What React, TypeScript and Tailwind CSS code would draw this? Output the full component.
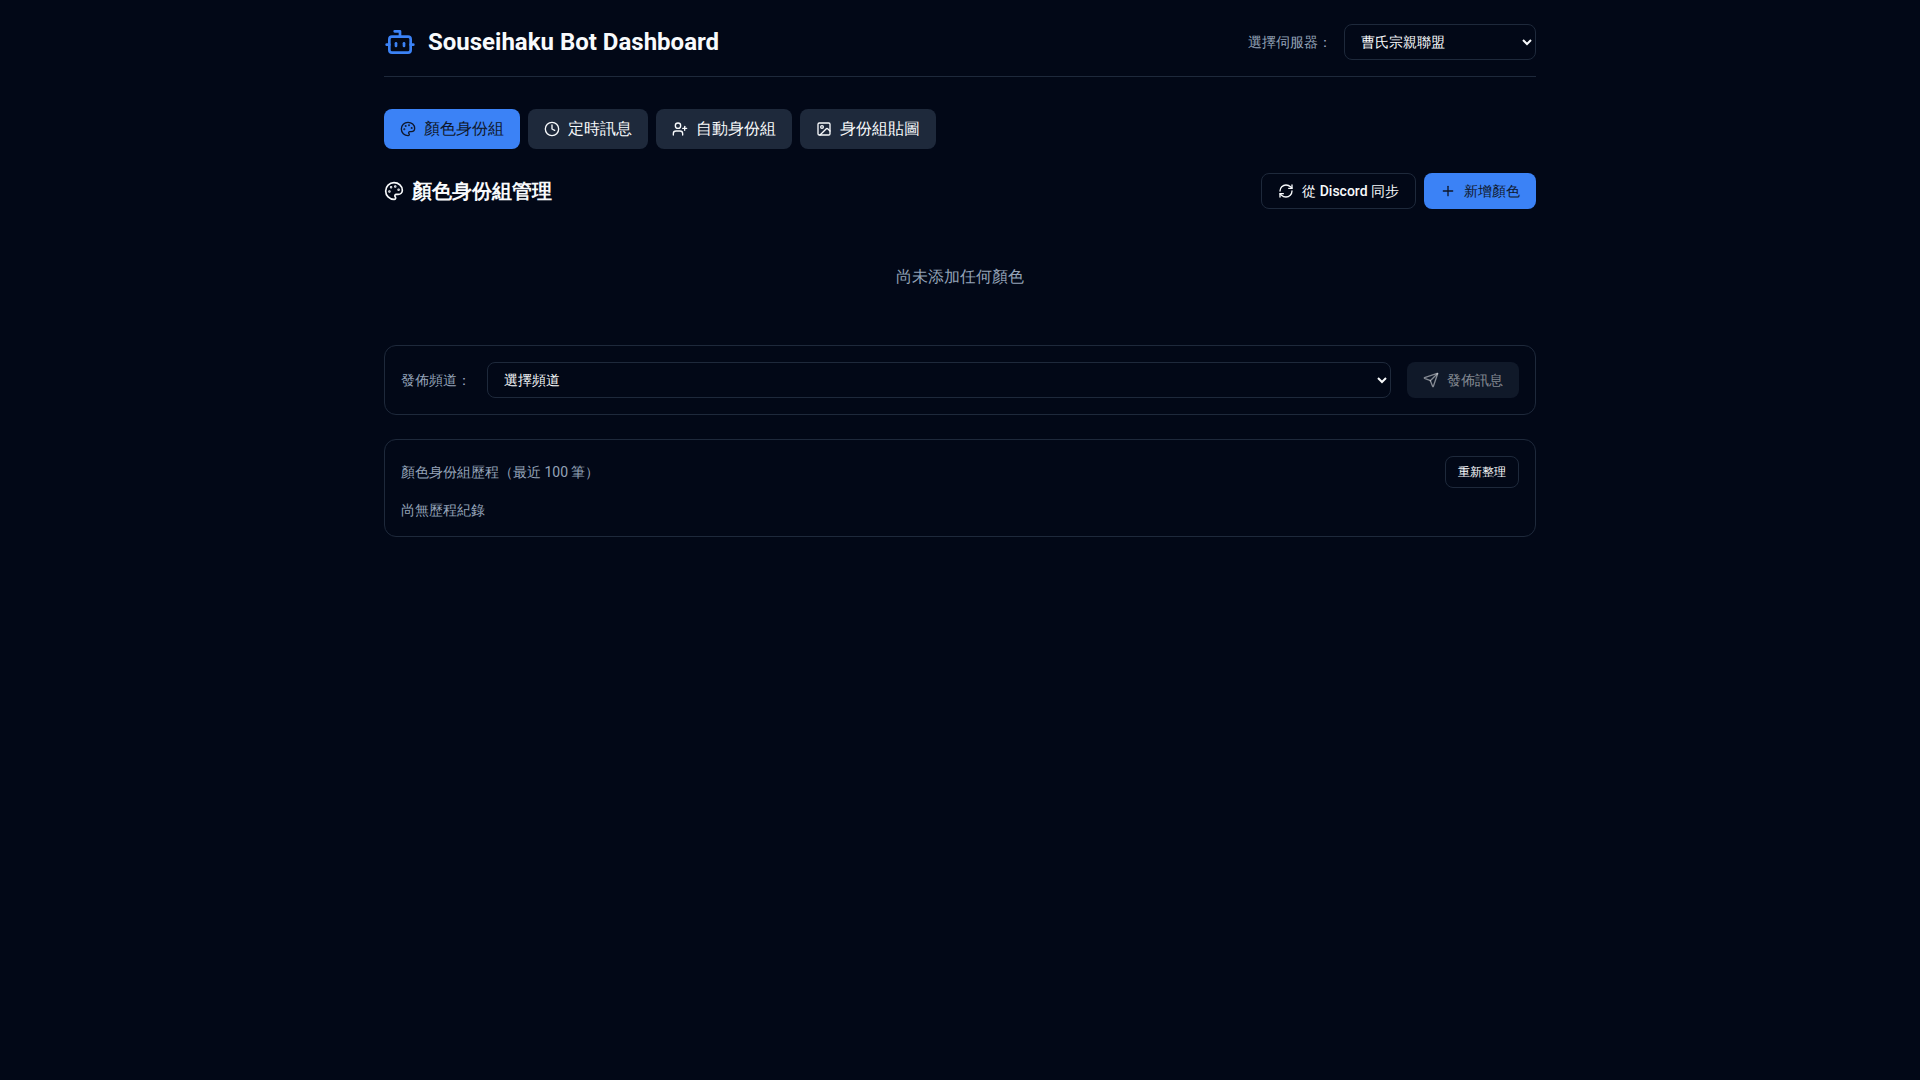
import { Bot, Clock, Image, Palette, Plus, RefreshCw, Send, UserPlus } from "lucide-react";

const font = "font-['Roboto',sans-serif]";

export default function App() {
  return (
    <div className={`min-h-screen bg-[#020817] text-[#f8fafc] ${font}`}>
      <div className="mx-auto w-[1152px]">
        <header className="flex items-center justify-between border-b border-[#1e293b] pt-6 pb-4">
          <div className="flex items-center gap-3">
            <Bot className="h-8 w-8 text-[#3b82f6]" />
            <h1 className="text-2xl font-bold">Souseihaku Bot Dashboard</h1>
          </div>
          <div className="flex items-center gap-3">
            <span className="text-sm font-light text-[#94a3b8]">選擇伺服器：</span>
            <select className="h-9 w-[192px] rounded-lg border border-[#1e293b] bg-[#020817] px-3 text-sm font-light">
              <option>曹氏宗親聯盟</option>
            </select>
          </div>
        </header>

        <nav className="mt-8 flex gap-2">
          <button className="flex h-10 items-center gap-2 rounded-lg bg-[#3b82f6] px-4 text-base font-light text-[#0f172a]">
            <Palette className="h-4 w-4" />
            顏色身份組
          </button>
          <button className="flex h-10 items-center gap-2 rounded-lg bg-[#1e293b] px-4 text-base font-light">
            <Clock className="h-4 w-4" />
            定時訊息
          </button>
          <button className="flex h-10 items-center gap-2 rounded-lg bg-[#1e293b] px-4 text-base font-light">
            <UserPlus className="h-4 w-4" />
            自動身份組
          </button>
          <button className="flex h-10 items-center gap-2 rounded-lg bg-[#1e293b] px-4 text-base font-light">
            <Image className="h-4 w-4" />
            身份組貼圖
          </button>
        </nav>

        <section className="mt-6 flex items-center justify-between">
          <h2 className="flex items-center gap-2 text-xl font-semibold">
            <Palette className="h-5 w-5" />
            顏色身份組管理
          </h2>
          <div className="flex gap-2">
            <button className="flex h-9 items-center gap-2 rounded-lg border border-[#1e293b] px-4 text-sm font-light">
              <RefreshCw className="h-4 w-4" />
              <span>
                從 <span className="font-medium">Discord</span> 同步
              </span>
            </button>
            <button className="flex h-9 items-center gap-2 rounded-lg bg-[#3b82f6] px-4 text-sm font-light text-[#0f172a]">
              <Plus className="h-4 w-4" />
              新增顏色
            </button>
          </div>
        </section>

        <p className="py-14 text-center text-base font-light text-[#94a3b8]">尚未添加任何顏色</p>

        <div className="flex items-center gap-4 rounded-xl border border-[#1e293b] p-4">
          <span className="text-sm font-light text-[#94a3b8]">發佈頻道：</span>
          <select className="h-9 flex-1 rounded-lg border border-[#1e293b] bg-[#020817] px-3 text-sm font-light">
            <option>選擇頻道</option>
          </select>
          <button className="flex h-9 items-center gap-2 rounded-lg bg-[#1e293b]/50 px-4 text-sm font-light text-[#f8fafc]/50">
            <Send className="h-4 w-4" />
            發佈訊息
          </button>
        </div>

        <div className="mt-6 rounded-xl border border-[#1e293b] p-4">
          <div className="flex items-center justify-between">
            <span className="text-sm font-light text-[#94a3b8]">
              顏色身份組歷程（最近 <span className="font-normal">100</span> 筆）
            </span>
            <button className="h-8 rounded-lg border border-[#1e293b] px-3 text-xs font-light">重新整理</button>
          </div>
          <p className="mt-3 text-sm font-light text-[#94a3b8]">尚無歷程紀錄</p>
        </div>
      </div>
    </div>
  );
}
